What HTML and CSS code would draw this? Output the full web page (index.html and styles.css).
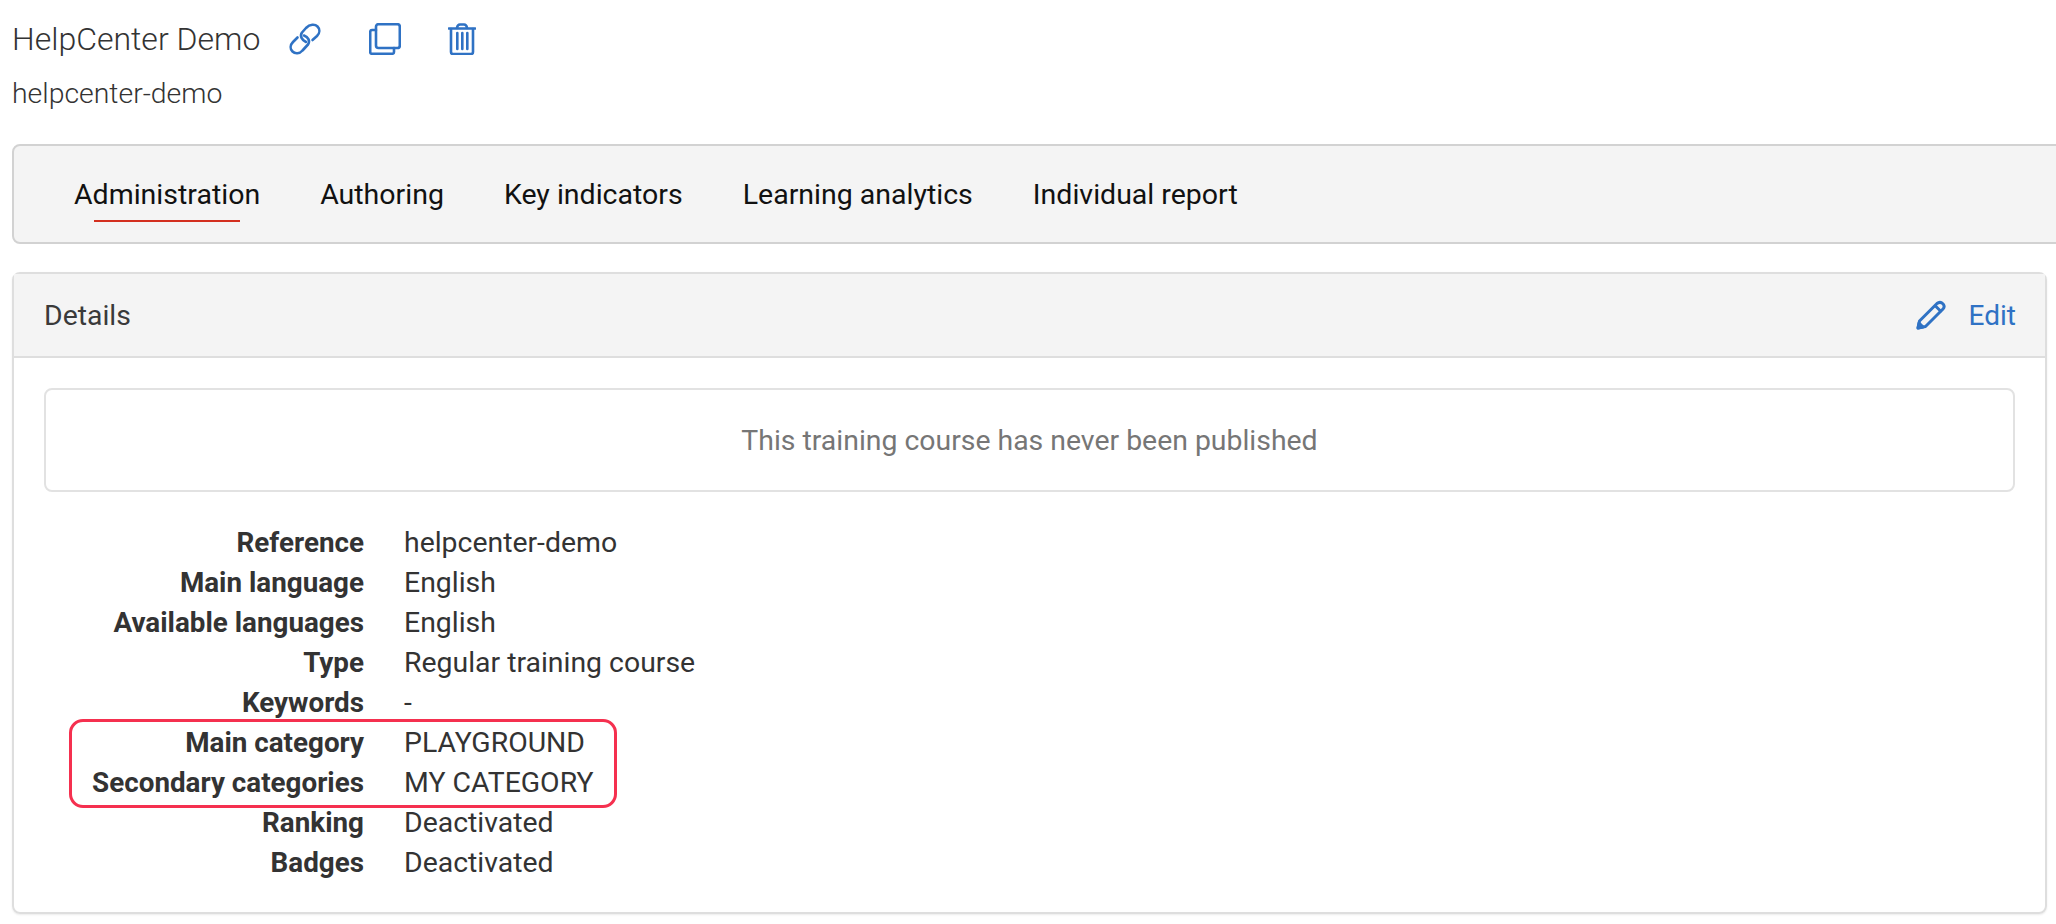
FILE: index.html
```html
<!DOCTYPE html>
<html lang="en">
<head>
<meta charset="utf-8">
<title>HelpCenter Demo</title>
<link rel="stylesheet" href="styles.css">
</head>
<body>
<header class="head">
  <div class="title-row">
    <h1 class="title">HelpCenter Demo</h1>
    <div class="actions">
      <svg class="icon icon-link" viewBox="0 0 32 32" aria-hidden="true">
        <path d="M17 19 C13 17 10.500 13 13 9.500 L17 5 C21 1 26 1 28.500 3.500 C31 6 31 10 28 13 L23.500 17"/>
        <path d="M15 12.500 C19 14 21.500 17.500 19 21.500 L13.500 27.500 C10.500 31 6 31 3.500 28.500 C1 26 1 22 4 19 L8.500 14.500"/>
      </svg>
      <svg class="icon icon-copy" viewBox="0 0 32 32" aria-hidden="true">
        <rect x="7" y="1.200" width="23.800" height="23.800" rx="2.500"/>
        <path d="M7 7 H3 Q1.200 7 1.200 9 V29 Q1.200 30.800 3 30.800 H23 Q25 30.800 25 29 V25"/>
      </svg>
      <svg class="icon icon-trash" viewBox="0 0 28 32" aria-hidden="true">
        <path d="M0.800 5.500 H27.200"/>
        <path d="M9 5 Q9.500 1.500 12 1.500 H16 Q18.500 1.500 19 5"/>
        <path d="M3 6 V29 Q3 31 5 31 H23 Q25 31 25 29 V6"/>
        <path d="M9.300 10 V26 M14.300 10 V26 M19.300 10 V26"/>
      </svg>
    </div>
  </div>
  <p class="slug">helpcenter-demo</p>
</header>

<nav class="tabs">
  <a class="tab is-active">Administration</a>
  <a class="tab">Authoring</a>
  <a class="tab">Key indicators</a>
  <a class="tab">Learning analytics</a>
  <a class="tab">Individual report</a>
</nav>

<section class="card">
  <div class="card-head">
    <h2 class="card-title">Details</h2>
    <a class="edit">
      <svg class="icon icon-pencil" viewBox="0 0 30 30" aria-hidden="true">
        <path d="M2 28 L3.500 21 L21 3.500 Q23.500 1.500 26 3 L27.500 4.500 Q29 7 27 9 L9.500 26.500 Z"/>
        <path d="M19.500 6 L24.500 11"/>
        <path class="nib" d="M2 28 L3 23 L7 27 Z"/>
      </svg>
      <span>Edit</span>
    </a>
  </div>
  <div class="card-body">
    <div class="notice">This training course has never been published</div>
    <dl class="facts">
      <div class="fact"><dt>Reference</dt><dd>helpcenter-demo</dd></div>
      <div class="fact"><dt>Main language</dt><dd>English</dd></div>
      <div class="fact"><dt>Available languages</dt><dd>English</dd></div>
      <div class="fact"><dt>Type</dt><dd>Regular training course</dd></div>
      <div class="fact"><dt>Keywords</dt><dd>-</dd></div>
      <div class="fact"><dt>Main category</dt><dd>PLAYGROUND</dd></div>
      <div class="fact"><dt>Secondary categories</dt><dd>MY CATEGORY</dd></div>
      <div class="fact"><dt>Ranking</dt><dd>Deactivated</dd></div>
      <div class="fact"><dt>Badges</dt><dd>Deactivated</dd></div>
      <div class="highlight"></div>
    </dl>
  </div>
</section>
</body>
</html>
```
FILE: styles.css
```css
* { box-sizing: border-box; }
html, body { margin: 0; height: 924px; overflow: hidden; background: #fff; }
body {
  font-family: Roboto, "Liberation Sans", sans-serif;
  color: #333;
  padding: 0 9px 0 12px;
}
.head { height: 144px; padding-top: 17px; }
.title-row { display: flex; align-items: center; height: 44px; }
.title { margin: 0; font-size: 32px; font-weight: 300; line-height: 44px; }
.actions { display: flex; align-items: center; margin-left: 29px; }
.icon { display: block; fill: none; stroke: #2f72c4; stroke-width: 2.6; stroke-linecap: round; stroke-linejoin: round; }
.icon-link, .icon-copy { width: 32px; height: 32px; }
.icon-copy { margin-left: 48px; }
.icon-trash { width: 28px; height: 32px; margin-left: 47px; }
.slug { margin: 16px 0 0; font-size: 28.4px; font-weight: 300; line-height: 34px; }
.tabs {
  display: flex; align-items: stretch;
  height: 100px; margin-right: -30px; padding-left: 30px;
  background: #f4f4f4; border: 2px solid #d2d2d2; border-radius: 8px;
}
.tab {
  position: relative; padding: 0 30px; color: #111;
  font-size: 28.5px; line-height: 98px; white-space: nowrap;
}
.tab.is-active::after {
  content: ""; position: absolute; left: 50px; right: 50px; bottom: 20px;
  height: 2px; background: #d32f1f;
}
.card {
  margin-top: 28px; height: 642px;
  border: 2px solid #dedede; border-radius: 8px;
  box-shadow: 0 1px 2px rgba(0,0,0,.08);
}
.card-head {
  display: flex; align-items: center; justify-content: space-between;
  height: 84px; padding: 0 29px 0 30px;
  background: #f4f4f4; border-bottom: 2px solid #dedede;
}
.card-title { margin: 0; font-size: 28.4px; font-weight: 400; color: #3a3a3a; }
.edit { display: flex; align-items: center; gap: 23px; color: #2f72c4; font-size: 28px; }
.icon-pencil { width: 30px; height: 30px; stroke-width: 3; }
.icon-pencil .nib { fill: #2f72c4; }
.card-body { padding: 30px 30px 0; }
.notice {
  height: 104px; display: flex; align-items: center; justify-content: center;
  border: 2px solid #e2e2e2; border-radius: 8px;
  color: #767676; font-size: 28.4px;
}
.facts { position: relative; margin: 30px 0 0; }
.fact { display: flex; height: 40px; align-items: center; font-size: 28.4px; }
.fact dt { width: 320px; text-align: right; font-weight: 700; font-size: 27.8px; }
.fact dd { margin: 0 0 0 40px; }
.highlight {
  position: absolute; left: 25px; top: 197px; width: 548px; height: 89px;
  border: 3px solid #f5304f; border-radius: 14px;
}
```
